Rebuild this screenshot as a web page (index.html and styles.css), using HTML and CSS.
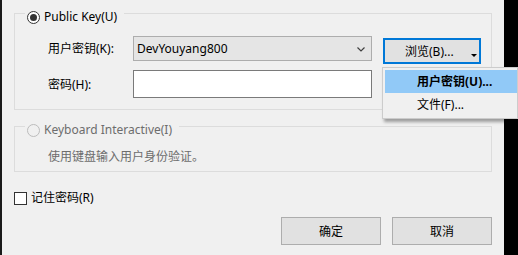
FILE: index.html
```html
<!DOCTYPE html>
<html lang="zh-CN">
<head>
    <meta charset="UTF-8">
    <title>用户身份验证</title>
    <link rel="stylesheet" href="styles.css">
</head>
<body>

<div class="ventana">
    <div class="borde-izq"></div>

    <div class="panel">
        <!-- Grupo: clave pública -->
        <div class="grupo">
            <div class="grupo-titulo">
                <span class="radio activo"></span>
                <span>Public Key(U)</span>
            </div>
            <div class="fila fila-usuario">
                <label class="etiqueta">用户密钥(K):</label>
                <div class="combo">
                    <span>DevYouyang800</span>
                    <svg class="chevron" width="8" height="5" viewBox="0 0 8 5"><path d="M0.5 0.5 L4 4 L7.5 0.5" fill="none" stroke="#404040" stroke-width="1.2"/></svg>
                </div>
                <button class="boton-examinar">
                    <span>浏览(B)...</span>
                    <span class="flecha"></span>
                </button>
            </div>
            <div class="fila fila-clave">
                <label class="etiqueta">密码(H):</label>
                <input class="campo" type="password">
            </div>
        </div>

        <!-- Grupo: teclado interactivo (deshabilitado) -->
        <div class="grupo grupo-teclado deshabilitado">
            <div class="grupo-titulo">
                <span class="radio"></span>
                <span>Keyboard Interactive(I)</span>
            </div>
            <p class="descripcion">使用键盘输入用户身份验证。</p>
        </div>

        <label class="recordar">
            <span class="casilla"></span>
            <span>记住密码(R)</span>
        </label>

        <div class="acciones">
            <button class="boton">确定</button>
            <button class="boton">取消</button>
        </div>
    </div>

    <div class="borde-der"></div>

    <!-- Menú desplegable del botón "浏览" -->
    <ul class="menu">
        <li class="seleccionado">用户密钥(U)...</li>
        <li>文件(F)...</li>
    </ul>
</div>

</body>
</html>
```

FILE: styles.css
```css
body {
    margin: 0;
    padding: 0;
    font-family: 'Noto Sans', 'Noto Sans CJK SC', sans-serif;
    font-size: 12px;
    color: #000;
    background: #000;
}
.ventana {
    position: relative;
    display: flex;
    width: 518px;
    height: 255px;
    overflow: hidden;
}
.borde-izq {
    width: 2px;
    background: #1a1a1a;
}
.borde-der {
    width: 14px;
    background: #000;
}
.panel {
    flex: 1;
    background: #f0f0f0;
    padding: 13px 12px 0 12px;
    display: flex;
    flex-direction: column;
}
.grupo {
    border: 1px solid #dcdcdc;
    padding: 0 0 11px 0;
}
.grupo-titulo {
    display: flex;
    align-items: center;
    width: fit-content;
    height: 18px;
    margin: -6px 0 0 10px;
    padding: 0 7px 0 2px;
    background: #f0f0f0;
    gap: 4px;
    line-height: 18px;
}
.radio {
    width: 11px;
    height: 11px;
    border: 1px solid #333;
    border-radius: 50%;
    background: #fff;
    display: flex;
    align-items: center;
    justify-content: center;
}
.radio.activo::after {
    content: "";
    width: 7px;
    height: 7px;
    border-radius: 50%;
    background: #333;
}
.fila {
    display: flex;
    align-items: center;
    padding-left: 33px;
}
.fila-usuario {
    margin-top: 10px;
    align-items: flex-start;
}
.fila-usuario .etiqueta {
    line-height: 25px;
}
.fila-clave {
    margin-top: 6px;
}
.etiqueta {
    width: 85px;
}
.combo {
    width: 237px;
    height: 23px;
    border: 1px solid #adadad;
    background: #e5e5e5;
    display: flex;
    align-items: center;
    justify-content: space-between;
    padding: 0 6px 0 3px;
    box-sizing: content-box;
    width: 228px;
}
.chevron {
    margin-top: 1px;
}
.boton-examinar {
    margin: 2px 0 0 11px;
    width: 98px;
    height: 26px;
    border: 2px solid #0078d7;
    background: #e1e1e1;
    font: inherit;
    display: flex;
    align-items: center;
    padding: 0 0 0 20px;
    gap: 17px;
}
.flecha {
    width: 0;
    height: 0;
    border-left: 3px solid transparent;
    border-right: 3px solid transparent;
    border-top: 3px solid #000;
    margin-top: 8px;
}
.campo {
    width: 239px;
    height: 28px;
    box-sizing: border-box;
    border: 1px solid #7a7a7a;
    background: #fff;
    margin: 0;
}
.grupo-teclado {
    margin-top: 16px;
    padding-bottom: 5px;
}
.deshabilitado {
    color: #6d6d6d;
}
.deshabilitado .radio {
    border-color: #bcbcbc;
    background: #f0f0f0;
}
.descripcion {
    margin: 9px 0 0 33px;
    line-height: 18px;
}
.recordar {
    display: flex;
    align-items: center;
    gap: 4px;
    margin-top: 17px;
    line-height: 18px;
}
.casilla {
    width: 11px;
    height: 11px;
    border: 1px solid #333;
    background: #fff;
}
.acciones {
    display: flex;
    justify-content: flex-end;
    gap: 11px;
    margin-top: 10px;
}
.boton {
    width: 100px;
    height: 28px;
    border: 1px solid #adadad;
    background: #e1e1e1;
    font: inherit;
    color: #000;
}
.menu {
    position: absolute;
    left: 382px;
    top: 67px;
    width: 136px;
    margin: 0;
    padding: 2px 0 2px 2px;
    list-style: none;
    background: #f0f0f0;
    border: 1px solid #cccccc;
    box-sizing: border-box;
    box-shadow: 2px 3px 3px rgba(0, 0, 0, 0.35);
}
.menu li {
    height: 23px;
    line-height: 23px;
    padding-left: 32px;
}
.menu li.seleccionado {
    background: #91c9f7;
    font-weight: bold;
}
```
